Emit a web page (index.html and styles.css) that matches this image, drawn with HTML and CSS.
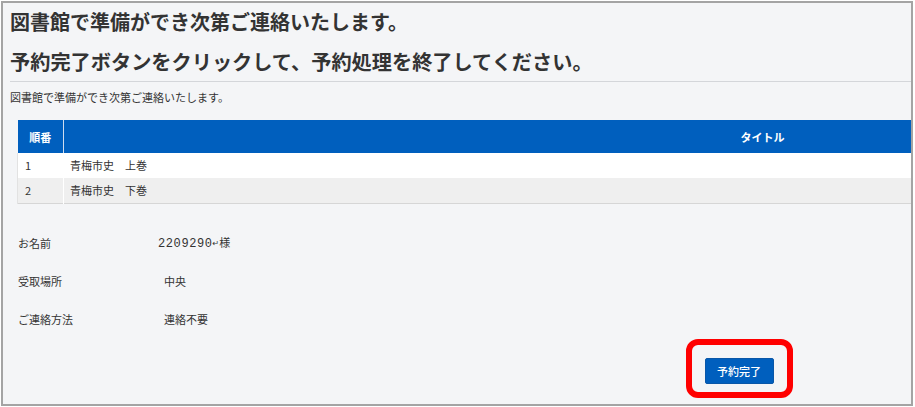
FILE: index.html
```html
<!DOCTYPE html>
<html lang="ja">
<head>
<meta charset="utf-8">
<title>予約確認</title>
<link rel="stylesheet" href="styles.css">
</head>
<body>
<div class="frame">
  <h1 class="title">図書館で準備ができ次第ご連絡いたします。</h1>
  <h2 class="title title-second">予約完了ボタンをクリックして、予約処理を終了してください。</h2>
  <p class="note">図書館で準備ができ次第ご連絡いたします。</p>
  <div class="content">
    <table class="list">
      <thead>
        <tr><th class="col-no">順番</th><th class="col-title">タイトル</th></tr>
      </thead>
      <tbody>
        <tr><td class="col-no">1</td><td>青梅市史　上巻</td></tr>
        <tr class="alt"><td class="col-no">2</td><td>青梅市史　下巻</td></tr>
      </tbody>
    </table>
    <dl class="info">
      <div class="info-row"><dt>お名前</dt><dd class="name">2209290<span class="ret">↵</span><span class="sama">様</span></dd></div>
      <div class="info-row"><dt>受取場所</dt><dd>中央</dd></div>
      <div class="info-row"><dt>ご連絡方法</dt><dd>連絡不要</dd></div>
    </dl>
    <div class="actions">
      <div class="btn-wrap">
        <button class="btn" type="button">予約完了</button>
        <span class="highlight"></span>
      </div>
    </div>
  </div>
</div>
</body>
</html>
```
FILE: styles.css
```css
* { box-sizing: border-box; }
html, body { margin: 0; padding: 0; background: #fff; }
body {
  font-family: "Noto Sans CJK JP", "Noto Sans", sans-serif;
  color: #333;
}
.frame {
  margin: 1px 0 0 1px;
  width: 912px;
  height: 405px;
  border: 2px solid #a4a4a4;
  background: #f4f5f7;
  overflow: hidden;
}
.title {
  margin: 0 0 0 7px;
  font-size: 20px;
  font-weight: 700;
  line-height: 38px;
  height: 38px;
  color: #333;
  white-space: nowrap;
}
.title-second {
  margin-top: 2px;
  height: 39px;
  font-size: 20.2px;
  border-bottom: 1px solid #d4d6da;
}
.note {
  margin: 7px 0 0 7px;
  font-size: 11px;
  line-height: 16px;
}
.content {
  width: 1444px;
  margin: 15px 0 0 14px;
}
.list {
  width: 1444px;
  border-collapse: collapse;
  font-size: 11px;
  border-bottom: 1px solid #d6d6d6;
}
.list th {
  background: #005fbe;
  color: #fff;
  font-weight: 700;
  height: 33px;
  padding: 0;
  text-align: center;
}
.list th.col-no { border-right: 1px solid #cfdcef; }
.list td {
  height: 25px;
  padding: 0 0 1px 6px;
  background: #fff;
  color: #333;
}
.list td.col-no {
  width: 46px;
  padding-left: 7px;
  border-right: 1px solid #fff;
  border-left: 1px solid #e2e2e2;
}
.list tr.alt td { background: #efefef; }
.info {
  margin: 20px 0 0 1px;
  font-size: 11px;
}
.info-row {
  display: flex;
  height: 38px;
  align-items: center;
}
.info dt { width: 140px; }
.info dd { margin: 0 0 0 6px; }
.info dd.name {
  margin-left: 0;
  font-family: "Liberation Mono", monospace;
  font-size: 12px;
  letter-spacing: 0.6px;
}
.ret {
  font-family: "DejaVu Sans", sans-serif;
  font-size: 8px;
  letter-spacing: 0;
  vertical-align: 1px;
}
.sama { font-family: "Noto Sans CJK JP", sans-serif; font-size: 11px; }
.actions {
  display: flex;
  justify-content: center;
  margin-top: 20px;
}
.btn-wrap { position: relative; }
.btn {
  display: block;
  width: 69px;
  height: 26px;
  padding: 0;
  border: 1px solid #0a57a8;
  border-radius: 2px;
  background: #005fbe;
  color: #fff;
  font-family: "Noto Sans CJK JP", sans-serif;
  font-size: 11px;
  font-weight: 500;
}
.highlight {
  position: absolute;
  left: -19px;
  top: -19px;
  width: 107px;
  height: 59px;
  border: 6px solid #ff0000;
  border-radius: 12px;
  pointer-events: none;
}
```
